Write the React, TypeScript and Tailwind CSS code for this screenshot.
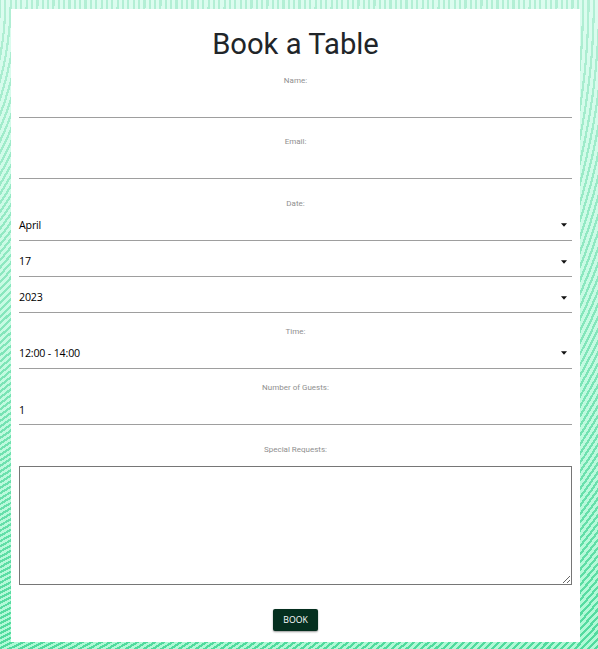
import React from "react";

// Ribbon lines curve from vertical at the top to diagonal at the bottom.
const SLOPE = 0.65;
const BASE = 300;
const integral = (x: number) => BASE * x + (SLOPE * x * x) / 2;
const inverse = (v: number) => (-BASE + Math.sqrt(BASE * BASE + 2 * SLOPE * v)) / SLOPE;

const ribbons = Array.from({ length: 200 }, (_, i) => {
  const start = i * 5.35;
  const points: string[] = [];
  for (let y = 0; y <= 656; y += 8) {
    const v = integral(start) - (y * y) / 2;
    if (v < -30000) break;
    points.push(`${inverse(v).toFixed(1)},${y}`);
  }
  return points.join(" ");
});

function Backdrop() {
  return (
    <svg className="absolute inset-0" width="598" height="649" viewBox="0 0 598 649" fill="none" shapeRendering="crispEdges">
      <defs>
        <linearGradient id="base" x1="0" y1="0" x2="0" y2="1">
          <stop offset="0" stopColor="#dcfcef" />
          <stop offset="1" stopColor="#b0f9d6" />
        </linearGradient>
        <linearGradient id="line" gradientUnits="userSpaceOnUse" x1="0" y1="0" x2="0" y2="649">
          <stop offset="0" stopColor="#b3efd5" />
          <stop offset="0.5" stopColor="#84e6bb" />
          <stop offset="1" stopColor="#50da9d" />
        </linearGradient>
      </defs>
      <rect width="598" height="649" fill="url(#base)" />
      {ribbons.map((points, i) => (
        <polyline key={i} points={points} stroke="url(#line)" strokeWidth="2.2" />
      ))}
    </svg>
  );
}

function Label({ children, className = "" }: { children: React.ReactNode; className?: string }) {
  return (
    <label className={`block text-center font-[Roboto,sans-serif] text-[8px] leading-3 text-[#8f8f8f] ${className}`}>
      <span className="relative top-px">{children}</span>
    </label>
  );
}

function Select({ value, className = "" }: { value: string; className?: string }) {
  return (
    <div className={`flex items-center justify-between border-b border-[#9e9e9e] pr-[5px] font-['Open_Sans','Noto_Sans',sans-serif] text-[10.67px] tracking-[-0.18px] text-black ${className}`}>
      <span>{value}</span>
      <svg width="6" height="4" viewBox="0 0 6 4" className="mt-px">
        <path d="M0 0.3h6L3 3.7z" fill="#111" />
      </svg>
    </div>
  );
}

export default function App() {
  return (
    <div className="relative h-[649px] w-[598px] overflow-hidden pl-[11px] pt-[9px]">
      <Backdrop />
      <form className="relative flex h-[633px] w-[569px] flex-col bg-white px-2">
        <h1 className="mt-[15px] text-center font-[Roboto,sans-serif] text-[29.2px] leading-10 text-[#212529]">
          Book a Table
        </h1>
        <Label className="mt-[10px]">Name:</Label>
        <input className="h-[32px] border-b border-[#9e9e9e] outline-none" />
        <Label className="mt-[17px]">Email:</Label>
        <input className="h-[32px] border-b border-[#9e9e9e] outline-none" />
        <Label className="mt-[18px]">Date:</Label>
        <Select value="April" className="h-[32px]" />
        <Select value="17" className="h-[36px] pt-[5px]" />
        <Select value="2023" className="h-[36px] pt-[5px]" />
        <Label className="mt-[12px]">Time:</Label>
        <Select value="12:00 - 14:00" className="h-[32px]" />
        <Label className="mt-[12px]">Number of Guests:</Label>
        <div className="flex h-[32px] items-center border-b border-[#9e9e9e] pt-[2px] font-['Open_Sans','Noto_Sans',sans-serif] text-[10.67px] text-black">1</div>
        <Label className="mt-[18px]">Special Requests:</Label>
        <textarea className="mt-[11px] h-[119px] w-full shrink-0 resize border border-[#767676] outline-none" />
        <button type="button" className="mt-6 h-[22px] w-[45px] self-center rounded-[2px] bg-[#052f1f] pt-px font-['Open_Sans','Noto_Sans',sans-serif] text-[8.7px] text-white shadow-[0_1px_2px_rgba(0,0,0,0.4)]">
          BOOK
        </button>
      </form>
    </div>
  );
}
